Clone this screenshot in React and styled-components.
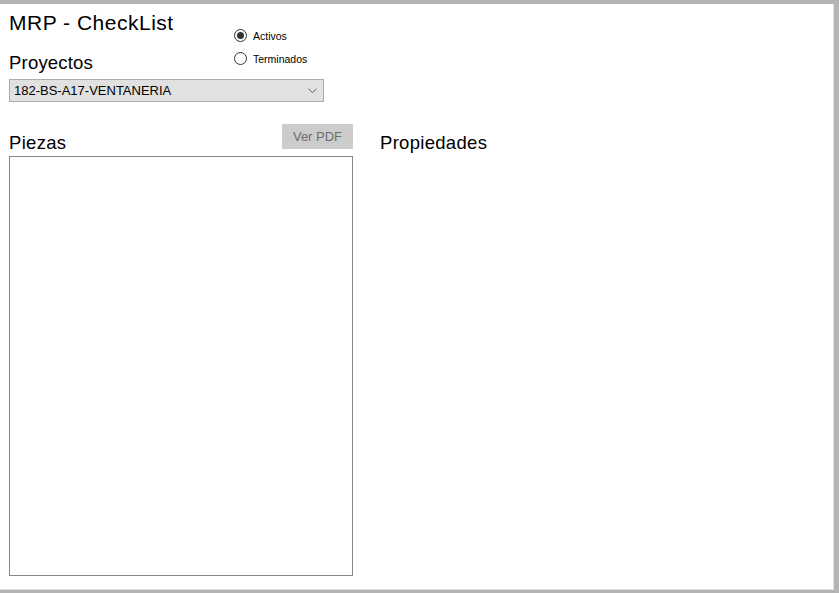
import React, { useState } from "react";
import styled, { createGlobalStyle } from "styled-components";

const GlobalStyle = createGlobalStyle`
  html, body {
    margin: 0;
    padding: 0;
    background: #ffffff;
  }
  body {
    font-family: "Liberation Sans", Arial, sans-serif;
    color: #000000;
  }
  * {
    box-sizing: border-box;
  }
`;

const App = () => {
  const [estado, setEstado] = useState("activos");

  return (
    <>
      <GlobalStyle />
      <Window>
        <Content>
          <Header>
            <Title>MRP - CheckList</Title>
            <RadioGroup>
              <RadioRow onClick={() => setEstado("activos")}>
                <RadioCircle checked={estado === "activos"} />
                <RadioLabel>Activos</RadioLabel>
              </RadioRow>
              <RadioRow onClick={() => setEstado("terminados")}>
                <RadioCircle checked={estado === "terminados"} />
                <RadioLabel>Terminados</RadioLabel>
              </RadioRow>
            </RadioGroup>
            <ProjectsLabel>Proyectos</ProjectsLabel>
            <Select>
              <span>182-BS-A17-VENTANERIA</span>
              <svg width="9" height="6" viewBox="0 0 9 6">
                <polyline points="0.5,0.8 4.5,4.6 8.5,0.8" fill="none" stroke="#5f5f5f" strokeWidth="1" />
              </svg>
            </Select>
          </Header>

          <Main>
            <LeftPanel>
              <PanelHeader>
                <SectionLabel>Piezas</SectionLabel>
                <PdfButton disabled>Ver PDF</PdfButton>
              </PanelHeader>
              <ListBox />
            </LeftPanel>
            <RightPanel>
              <SectionLabel>Propiedades</SectionLabel>
            </RightPanel>
          </Main>
        </Content>
      </Window>
    </>
  );
};

const Window = styled.div`
  height: 100vh;
  border-top: 4px solid #b4b4b4;
  border-right: 5px solid #b4b4b4;
  border-bottom: 3px solid #b4b4b4;
`;

const Content = styled.div`
  height: 100%;
  border-right: 1px solid #e3e3e3;
  border-bottom: 1px solid #e3e3e3;
  padding-left: 9px;
`;

const Header = styled.div`
  display: grid;
  grid-template-columns: 225px auto;
  grid-template-rows: auto auto auto;
  align-items: start;
  padding-top: 7px;
`;

const Title = styled.h1`
  grid-column: 1;
  grid-row: 1;
  margin: 0;
  font-size: 21px;
  line-height: 24px;
  font-weight: normal;
  letter-spacing: 0.5px;
`;

const RadioGroup = styled.div`
  grid-column: 2;
  grid-row: 1 / span 2;
  margin-top: 13px;
  display: flex;
  flex-direction: column;
`;

const RadioRow = styled.label`
  display: flex;
  align-items: center;
  height: 23px;
  cursor: pointer;
`;

const RadioCircle = styled.span`
  position: relative;
  width: 13px;
  height: 13px;
  border: 1px solid #333333;
  border-radius: 50%;
  background: #ffffff;
  margin-right: 6px;

  &::after {
    content: "";
    display: ${({ checked }) => (checked ? "block" : "none")};
    position: absolute;
    top: 2px;
    left: 2px;
    width: 7px;
    height: 7px;
    border-radius: 50%;
    background: #333333;
  }
`;

const RadioLabel = styled.span`
  font-size: 10.5px;
`;

const ProjectsLabel = styled.div`
  grid-column: 1;
  grid-row: 2;
  margin-top: 17px;
  font-size: 18.5px;
  line-height: 22px;
  letter-spacing: 0.2px;
`;

const Select = styled.div`
  grid-column: 1 / span 2;
  grid-row: 3;
  margin-top: 5px;
  width: 315px;
  height: 23px;
  display: flex;
  align-items: center;
  justify-content: space-between;
  padding: 0 6px 0 4px;
  background: #e1e1e1;
  border: 1px solid #adadad;
  font-size: 13px;

  svg {
    margin-top: 1px;
  }
`;

const Main = styled.div`
  display: flex;
  gap: 27px;
  margin-top: 22px;
`;

const LeftPanel = styled.div`
  width: 344px;
  display: flex;
  flex-direction: column;
`;

const PanelHeader = styled.div`
  display: flex;
  justify-content: space-between;
  align-items: flex-start;
  height: 32px;
`;

const SectionLabel = styled.div`
  margin-top: 8px;
  font-size: 18.5px;
  line-height: 22px;
  letter-spacing: 0.3px;
`;

const PdfButton = styled.button`
  width: 71px;
  height: 25px;
  padding: 0;
  background: #cccccc;
  border: 1px solid #cccccc;
  color: #6d6d6d;
  font-family: "Liberation Sans", Arial, sans-serif;
  font-size: 13px;
`;

const ListBox = styled.div`
  width: 344px;
  height: 420px;
  border: 1px solid #828790;
  background: #ffffff;
`;

const RightPanel = styled.div`
  display: flex;
  flex-direction: column;
`;

export default App;
